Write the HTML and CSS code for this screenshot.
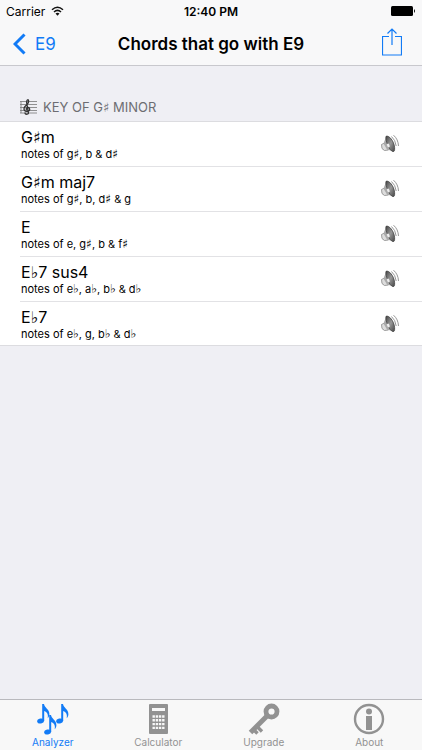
FILE: index.html
```
<!DOCTYPE html>
<html lang="en">
<head>
<meta charset="utf-8">
<meta name="viewport" content="width=device-width, initial-scale=1">
<title>Chords that go with E9</title>
<link rel="stylesheet" href="styles.css">
</head>
<body>
<svg class="defs" aria-hidden="true">
  <defs>
    <linearGradient id="cone" x1="0" y1="0" x2="1" y2="1">
      <stop offset="0" stop-color="#444"/>
      <stop offset="0.5" stop-color="#999"/>
      <stop offset="1" stop-color="#444"/>
    </linearGradient>
    <symbol id="speaker" viewBox="0 0 20 20">
      <path d="M1.500 10.500 4.500 9l4 7-4 .500Q1 15.500 1.500 10.500z" fill="#ddd" stroke="#888" stroke-width=".8"/>
      <path d="M3.500 9.500 6 3 14 17.500 7 15.500z" fill="#aaa"/>
      <path d="M6 2.300C9 1 14 7 14.600 13.500c.2 3-.3 4.300-1.600 4.100C9.500 17 5 6.500 6 2.300z" fill="url(#cone)" stroke="#444" stroke-width=".8"/>
      <ellipse cx="8.300" cy="11.500" rx="1.200" ry="2" transform="rotate(-24 8.300 11.500)" fill="#eee"/>
      <path d="M11.500 2.500q4 3.500 4.700 9.500M13.500 1.200q4.700 4 5 10.800" fill="none" stroke="#999" stroke-width="1"/>
    </symbol>
    <symbol id="note" viewBox="0 0 13 20">
      <ellipse cx="3.600" cy="17" rx="3.500" ry="2.500" transform="rotate(-12 3.600 17)"/>
      <path d="M5.200 0H7c.4 4 5.600 5 5.400 10.200-.1 1.600-.7 2.900-1.700 4 .8-4-.7-6-3.500-7.200V17H5.200z"/>
    </symbol>
  </defs>
</svg>
<header class="top">
  <div class="status">
    <div class="carrier">Carrier
      <svg class="wifi" viewBox="0 0 13 10" aria-hidden="true">
        <path d="M1 3.700q5.500-5 11 0M3 6q3.500-3.200 7 0" fill="none" stroke="#111" stroke-width="1.500"/>
        <path d="M4.500 7.500q2-1.700 4 0l-2 2.200z" fill="#111"/>
      </svg>
    </div>
    <div class="time">12:40 PM</div>
    <svg class="battery" viewBox="0 0 25 10" aria-hidden="true">
      <rect width="22" height="10" rx="1.500"/><path d="M23 3q2 2 0 4z"/>
    </svg>
  </div>
  <nav class="navbar">
    <a class="back" href="#">
      <svg viewBox="0 0 13 22" aria-hidden="true"><path d="M11.500 1.500 2 11l9.500 9.500" fill="none" stroke="currentColor" stroke-width="3"/></svg>
      E9
    </a>
    <h1>Chords that go with E9</h1>
    <button class="share" type="button" aria-label="Share">
      <svg viewBox="0 0 20 28" aria-hidden="true"><path d="M7 8.500H.5v18.500h19V8.500H13M10 17V1M5.500 5.500 10 1l4.500 4.500" fill="none" stroke="currentColor" stroke-width="1.200"/></svg>
    </button>
  </nav>
</header>
<main>
  <h2>
    <svg viewBox="0 0 17 16" aria-hidden="true">
      <path d="M0 2.500h17M0 5.500h17M0 8.500h17M0 11.500h17M0 14h17M1 2.500V14" stroke="#777" fill="none" stroke-width=".8"/>
      <path d="M5 13.500q0 2 2 1.700t1.200-2.500L6.600 3.500Q6.500 1 8 .7q1.500 1.800-.5 4.300L5 7.500q-2.200 3 .3 4.600 4 1.200 4.400-1.800-.5-2.600-2.700-1.600-1.400 1-.3 2.300" fill="none" stroke="#333" stroke-width="1.300"/>
    </svg>
    <span>KEY OF G<i>♯</i> MINOR</span>
  </h2>
  <ul class="chords">
    <li><div class="chord"><h3>G<i>♯</i>m</h3><p>notes of g<i>♯</i>, b &amp; d<i>♯</i></p></div><button type="button" aria-label="Play G♯m"><svg aria-hidden="true"><use href="#speaker"/></svg></button></li>
    <li><div class="chord"><h3>G<i>♯</i>m maj7</h3><p>notes of g<i>♯</i>, b, d<i>♯</i> &amp; g</p></div><button type="button" aria-label="Play G♯m maj7"><svg aria-hidden="true"><use href="#speaker"/></svg></button></li>
    <li><div class="chord"><h3>E</h3><p>notes of e, g<i>♯</i>, b &amp; f<i>♯</i></p></div><button type="button" aria-label="Play E"><svg aria-hidden="true"><use href="#speaker"/></svg></button></li>
    <li><div class="chord"><h3>E<i>♭</i>7 sus4</h3><p>notes of e<i>♭</i>, a<i>♭</i>, b<i>♭</i> &amp; d<i>♭</i></p></div><button type="button" aria-label="Play E♭7 sus4"><svg aria-hidden="true"><use href="#speaker"/></svg></button></li>
    <li><div class="chord"><h3>E<i>♭</i>7</h3><p>notes of e<i>♭</i>, g, b<i>♭</i> &amp; d<i>♭</i></p></div><button type="button" aria-label="Play E♭7"><svg aria-hidden="true"><use href="#speaker"/></svg></button></li>
  </ul>
</main>
<nav class="tabs">
  <a class="active" href="#">
    <svg viewBox="0 0 32 32" aria-hidden="true" fill="currentColor">
      <use href="#note" x="0" y="1" width="13" height="20"/>
      <use href="#note" x="7" y="12" width="13" height="20"/>
      <use href="#note" x="19" y="1" width="13" height="20"/>
    </svg>
    Analyzer
  </a>
  <a href="#">
    <svg viewBox="0 0 32 32" aria-hidden="true">
      <rect x="7" y="1" width="19" height="30" rx="1" fill="currentColor"/>
      <path d="M10 6.500h13" stroke="#f8f8f8" stroke-width="3"/>
      <path d="M10.500 13.500h12M10.500 17.300h12M10.500 21.100h12M10.500 24.900h12" stroke="#f8f8f8" stroke-width="2.400" stroke-dasharray="2.400 .8"/>
    </svg>
    Calculator
  </a>
  <a href="#">
    <svg viewBox="0 0 32 32" aria-hidden="true" fill="none" stroke="currentColor">
      <circle cx="23.500" cy="8.500" r="5.500" stroke-width="4.800"/>
      <path d="M19 13 2.500 29.500" stroke-width="5"/>
      <path d="m9 23.500 5 5M5 26l4.500 4.500" stroke-width="3.400"/>
    </svg>
    Upgrade
  </a>
  <a href="#">
    <svg viewBox="0 0 32 32" aria-hidden="true">
      <circle cx="16" cy="16" r="14" fill="none" stroke="currentColor" stroke-width="2.400"/>
      <circle cx="16" cy="8.500" r="3" fill="currentColor"/>
      <path d="M13 13h6v14h-6z" fill="currentColor"/>
    </svg>
    About
  </a>
</nav>
</body>
</html>
```
FILE: styles.css
```
* {
  box-sizing: border-box;
}

body {
  margin: 0;
  min-height: 100vh;
  display: flex;
  flex-direction: column;
  background: #efeff4;
  color: #000;
  font-family: Inter, "Liberation Sans", sans-serif;
}

h1, h2, h3, p, ul {
  margin: 0;
  padding: 0;
  font-weight: 400;
}

a {
  color: inherit;
  text-decoration: none;
}

button {
  padding: 0;
  border: 0;
  background: none;
}

svg {
  display: block;
  flex: none;
}

i {
  font-family: "DejaVu Sans", sans-serif;
  font-style: normal;
  line-height: 1;
}

.defs {
  width: 0;
  height: 0;
  position: absolute;
}

.top {
  background: #f8f8f9;
  border-bottom: 1px solid #c8c8cd;
}

.status {
  display: grid;
  grid-template-columns: 1fr auto 1fr;
  align-items: center;
  height: 22px;
  padding: 0 6px;
  font-size: 12px;
}

.carrier {
  display: flex;
  align-items: center;
  gap: 6px;
}

.wifi {
  width: 13px;
  height: 10px;
}

.time {
  font-weight: 600;
}

.battery {
  width: 25px;
  height: 10px;
  justify-self: end;
}

.navbar {
  display: grid;
  grid-template-columns: 1fr auto 1fr;
  align-items: center;
  height: 43px;
  padding: 0 13px;
}

.navbar h1 {
  font-size: 17px;
  font-weight: 600;
}

.back {
  display: flex;
  align-items: center;
  gap: 9px;
  color: #127bf6;
  font-size: 17px;
}

.back svg {
  width: 13px;
  height: 22px;
}

.share {
  justify-self: end;
  margin-right: 7px;
  padding-bottom: 3px;
  color: #127bf6;
}

.share svg {
  width: 20px;
  height: 28px;
}

main {
  flex: 1;
}

h2 {
  display: flex;
  align-items: center;
  gap: 6px;
  padding: 32px 20px 5px;
  color: #6d6d72;
  font-size: 13px;
  line-height: 18px;
}

h2 svg {
  width: 17px;
  height: 16px;
}

.chords {
  list-style: none;
  background: #fff;
  border: solid #dcdce0;
  border-width: 1px 0;
}

.chords li {
  display: flex;
  align-items: center;
  height: 45px;
  margin-left: 20px;
  padding: 0 22px 0 1px;
  border-bottom: 1px solid #e2e2e5;
}

.chords li:last-child {
  height: 43px;
  border-bottom: 0;
}

.chord {
  flex: 1;
}

.chord h3 {
  font-size: 16px;
  line-height: 20px;
}

.chord p {
  font-size: 11px;
  line-height: 14px;
}

.chord i {
  font-weight: 700;
}

.chord p i {
  font-size: 12px;
}

.chords svg {
  width: 20px;
  height: 20px;
}

.tabs {
  display: grid;
  grid-template-columns: repeat(4, 1fr);
  height: 51px;
  border-top: 1px solid #b9b9bd;
  background: #f8f8f8;
  color: #929292;
  font-size: 10px;
  line-height: 14px;
}

.tabs a {
  display: flex;
  flex-direction: column;
  align-items: center;
  padding-top: 3px;
}

.tabs .active {
  color: #127bf6;
}

.tabs svg {
  width: 32px;
  height: 32px;
}
```
